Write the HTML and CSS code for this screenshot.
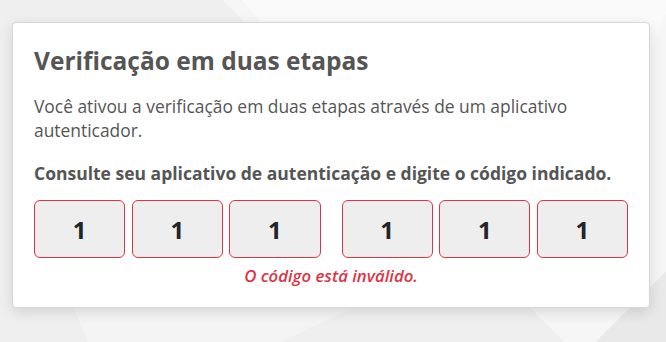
FILE: index.html
```html
<!DOCTYPE html>
<html lang="pt-BR">
<head>
<meta charset="utf-8">
<link rel="stylesheet" href="styles.css">
</head>
<body>
<div class="bg"></div>
<main class="card">
  <h1 class="title">Verificação em duas etapas</h1>
  <p class="lead">Você ativou a verificação em duas etapas através de um aplicativo autenticador.</p>
  <p class="hint">Consulte seu aplicativo de autenticação e digite o código indicado.</p>
  <div class="code">
    <div class="group">
      <div class="digit">1</div>
      <div class="digit">1</div>
      <div class="digit">1</div>
    </div>
    <div class="group">
      <div class="digit">1</div>
      <div class="digit">1</div>
      <div class="digit">1</div>
    </div>
  </div>
  <p class="error">O código está inválido.</p>
</main>
</body>
</html>
```
FILE: styles.css
```css
html, body {
  margin: 0;
  padding: 0;
  width: 666px;
  height: 342px;
  overflow: hidden;
}
body {
  position: relative;
  background: #efefef;
  font-family: "Open Sans", "Noto Sans", sans-serif;
  padding: 22px 16px 0 12px;
  box-sizing: border-box;
}
.bg {
  position: absolute;
  inset: 0;
  background:
    linear-gradient(135deg, transparent 0 93%, #e9e9e9 93%) ,
    linear-gradient(45deg, transparent 0 56%, #f6f6f6 56% 100%);
  z-index: 0;
}
.bg::before {
  content: "";
  position: absolute;
  left: 242px;
  top: 0;
  width: 430px;
  height: 60px;
  background: #fafafa;
  clip-path: polygon(0 0, 100% 0, 100% 0, 94% 100%, 12% 100%);
}
.bg::after {
  content: "";
  position: absolute;
  left: 40px;
  top: 300px;
  width: 600px;
  height: 42px;
  background: #f4f4f4;
  clip-path: polygon(5% 0, 55% 0, 40% 100%, 8% 100%);
}
.card {
  position: relative;
  z-index: 1;
  width: 638px;
  height: 286px;
  box-sizing: border-box;
  background: #fff;
  border: 1px solid #d6d6d6;
  border-radius: 4px;
  box-shadow: 0 4px 14px rgba(0,0,0,0.12);
  padding: 22px 21px 0 21px;
  color: #555;
}
.title {
  margin: 0;
  font-size: 24.5px;
  font-weight: 700;
  line-height: 32px;
  color: #555;
}
.lead {
  margin: 17px 0 0;
  font-size: 17.4px;
  line-height: 24px;
  color: #555;
  padding-right: 20px;
}
.hint {
  margin: 19px 0 0;
  font-size: 17.5px;
  font-weight: 700;
  line-height: 24px;
  color: #555;
}
.code {
  display: flex;
  gap: 21px;
  margin-top: 15px;
}
.group {
  display: flex;
  gap: 6.5px;
  flex: 1;
}
.digit {
  flex: 1;
  height: 58px;
  box-sizing: border-box;
  background: #eeeeee;
  border: 1px solid #dc3545;
  border-radius: 6px;
  display: flex;
  align-items: center;
  justify-content: center;
  font-size: 24px;
  font-weight: 700;
  color: #212529;
}
.error {
  margin: 8px 0 0;
  text-align: center;
  font-size: 16.8px;
  font-style: italic;
  font-weight: 600;
  line-height: 20px;
  color: #dc3545;
}
```
